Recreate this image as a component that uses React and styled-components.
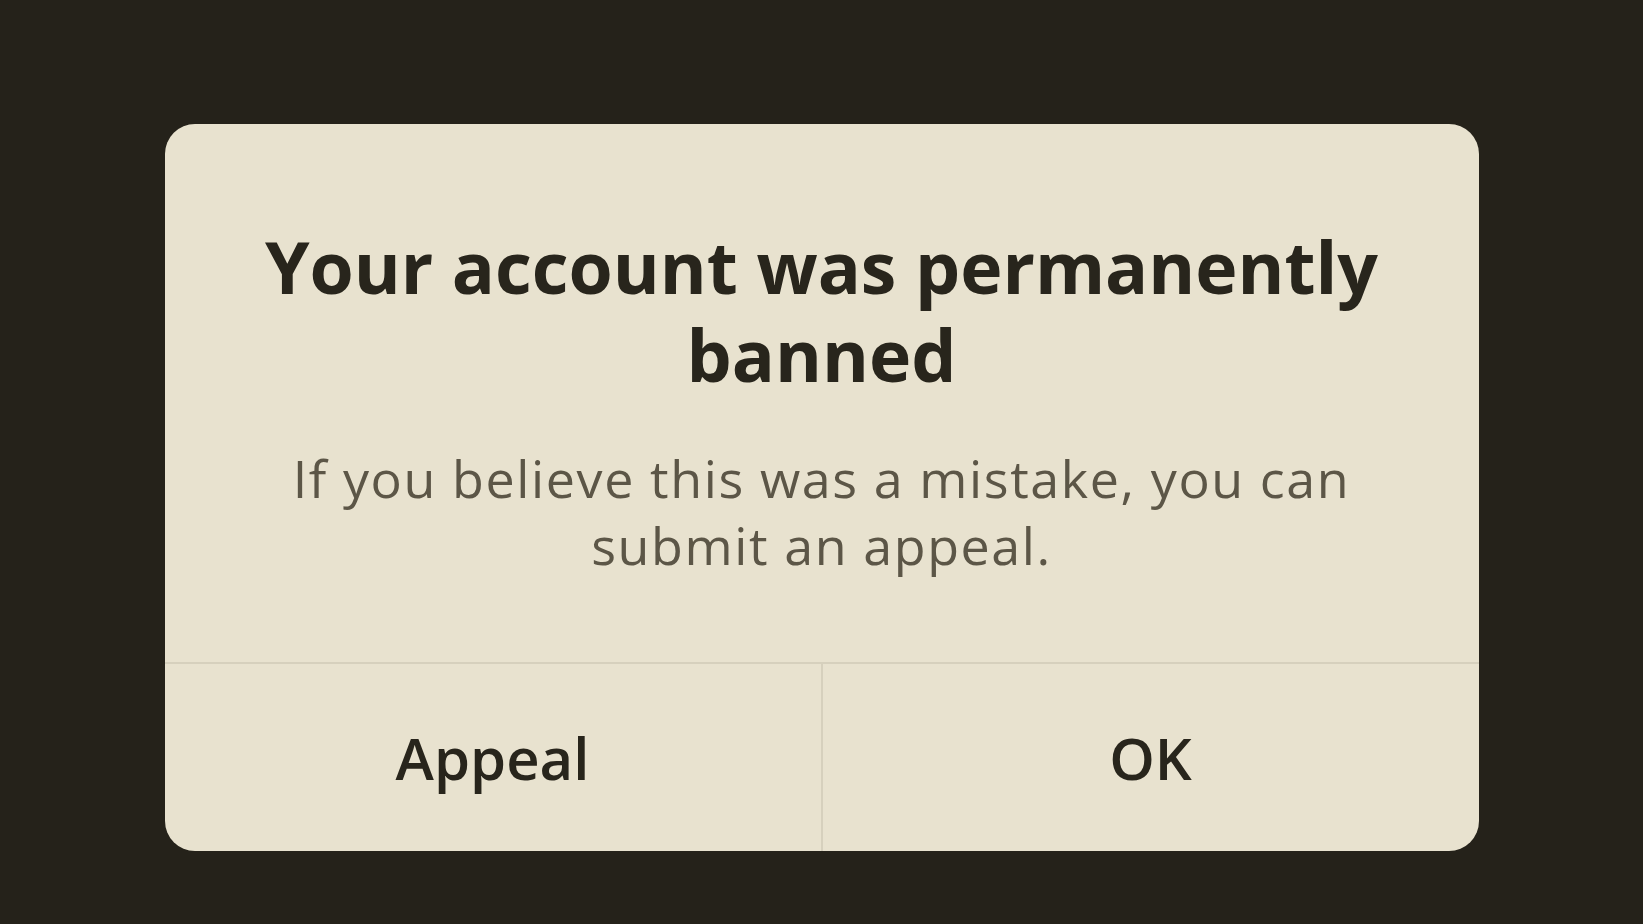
import styled, { createGlobalStyle } from 'styled-components'

const GlobalStyle = createGlobalStyle`
    html, body {
        margin: 0;
        padding: 0;
        background-color: #25221a;
    }
`;

const Screen = styled.div`
    width: 1643px;
    height: 924px;
    box-sizing: border-box;
    padding-top: 124px;
    display: flex;
    justify-content: center;
    align-items: flex-start;
    background-color: #25221a;
    font-family: 'Open Sans', 'Noto Sans', sans-serif;
    `;

const Dialog = styled.div`
    width: 1314px;
    height: 727px;
    display: flex;
    flex-direction: column;
    background-color: #e8e2cf;
    border-radius: 30px;
    overflow: hidden;
    `;

const Content = styled.div`
    flex: 1;
    display: flex;
    flex-direction: column;
    align-items: center;
    padding: 99px 40px 0px;
    text-align: center;
    `;

const Title = styled.h1`
    margin: 0;
    font-size: 71.5px;
    line-height: 88px;
    font-weight: 700;
    color: #28251c;
    white-space: nowrap;
    `;

const Message = styled.p`
    margin: 45px 0 0;
    font-size: 52px;
    line-height: 67px;
    font-weight: 400;
    letter-spacing: 1.6px;
    color: #5c5647;
    white-space: nowrap;
    `;

const ButtonRow = styled.div`
    display: flex;
    flex-direction: row;
    height: 187px;
    border-top: 2px solid #d6d0bd;
    `;

const ActionButton = styled.button`
    flex: 1;
    border: none;
    border-left: ${props => props.divider ? '2px solid #d6d0bd' : 'none'};
    background: transparent;
    font-family: inherit;
    font-size: 58px;
    font-weight: 600;
    color: #28251c;
    cursor: pointer;
    `;

export default function App() {
    return (
        <Screen>
            <GlobalStyle />
            <Dialog>
                <Content>
                    <Title>Your account was permanently<br />banned</Title>
                    <Message>If you believe this was a mistake, you can<br />submit an appeal.</Message>
                </Content>
                <ButtonRow>
                    <ActionButton>Appeal</ActionButton>
                    <ActionButton divider>OK</ActionButton>
                </ButtonRow>
            </Dialog>
        </Screen>
    )
}
